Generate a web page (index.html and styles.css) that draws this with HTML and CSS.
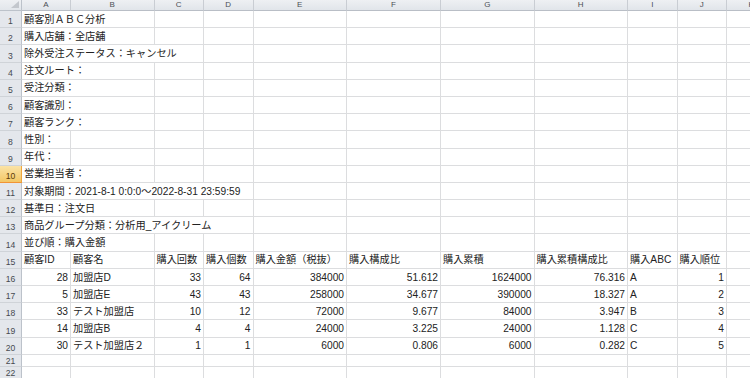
FILE: index.html
```html
<!DOCTYPE html>
<html lang="ja">
<head>
<meta charset="utf-8">
<title>顧客別ABC分析</title>
<link rel="stylesheet" href="styles.css">
</head>
<body>
<div class="sheet">
  <div class="corner"><svg width="8" height="7" viewBox="0 0 8 7"><polygon points="8,0 8,7 0,7" fill="#c3c7cd"/></svg></div>
  <div class="ch">A</div><div class="ch">B</div><div class="ch">C</div><div class="ch">D</div><div class="ch">E</div><div class="ch">F</div><div class="ch">G</div><div class="ch">H</div><div class="ch">I</div><div class="ch">J</div><div class="ch">K</div>

  <div class="rh">1</div><div class="c s2">顧客別ＡＢＣ分析</div><div class="c"></div><div class="c"></div><div class="c"></div><div class="c"></div><div class="c"></div><div class="c"></div><div class="c"></div><div class="c"></div><div class="c"></div>
  <div class="rh">2</div><div class="c s2">購入店舗：全店舗</div><div class="c"></div><div class="c"></div><div class="c"></div><div class="c"></div><div class="c"></div><div class="c"></div><div class="c"></div><div class="c"></div><div class="c"></div>
  <div class="rh">3</div><div class="c s3">除外受注ステータス：キャンセル</div><div class="c"></div><div class="c"></div><div class="c"></div><div class="c"></div><div class="c"></div><div class="c"></div><div class="c"></div><div class="c"></div>
  <div class="rh">4</div><div class="c s2">注文ルート：</div><div class="c"></div><div class="c"></div><div class="c"></div><div class="c"></div><div class="c"></div><div class="c"></div><div class="c"></div><div class="c"></div><div class="c"></div>
  <div class="rh">5</div><div class="c s2">受注分類：</div><div class="c"></div><div class="c"></div><div class="c"></div><div class="c"></div><div class="c"></div><div class="c"></div><div class="c"></div><div class="c"></div><div class="c"></div>
  <div class="rh">6</div><div class="c s2">顧客識別：</div><div class="c"></div><div class="c"></div><div class="c"></div><div class="c"></div><div class="c"></div><div class="c"></div><div class="c"></div><div class="c"></div><div class="c"></div>
  <div class="rh">7</div><div class="c s2">顧客ランク：</div><div class="c"></div><div class="c"></div><div class="c"></div><div class="c"></div><div class="c"></div><div class="c"></div><div class="c"></div><div class="c"></div><div class="c"></div>
  <div class="rh">8</div><div class="c">性別：</div><div class="c"></div><div class="c"></div><div class="c"></div><div class="c"></div><div class="c"></div><div class="c"></div><div class="c"></div><div class="c"></div><div class="c"></div><div class="c"></div>
  <div class="rh">9</div><div class="c">年代：</div><div class="c"></div><div class="c"></div><div class="c"></div><div class="c"></div><div class="c"></div><div class="c"></div><div class="c"></div><div class="c"></div><div class="c"></div><div class="c"></div>
  <div class="rh sel">10</div><div class="c s2">営業担当者：</div><div class="c"></div><div class="c"></div><div class="c"></div><div class="c"></div><div class="c"></div><div class="c"></div><div class="c"></div><div class="c"></div><div class="c"></div>
  <div class="rh">11</div><div class="c s4">対象期間：2021-8-1 0:0:0～2022-8-31 23:59:59</div><div class="c"></div><div class="c"></div><div class="c"></div><div class="c"></div><div class="c"></div><div class="c"></div><div class="c"></div>
  <div class="rh">12</div><div class="c s2">基準日：注文日</div><div class="c"></div><div class="c"></div><div class="c"></div><div class="c"></div><div class="c"></div><div class="c"></div><div class="c"></div><div class="c"></div><div class="c"></div>
  <div class="rh">13</div><div class="c s4">商品グループ分類：分析用_アイクリーム</div><div class="c"></div><div class="c"></div><div class="c"></div><div class="c"></div><div class="c"></div><div class="c"></div><div class="c"></div>
  <div class="rh">14</div><div class="c s2">並び順：購入金額</div><div class="c"></div><div class="c"></div><div class="c"></div><div class="c"></div><div class="c"></div><div class="c"></div><div class="c"></div><div class="c"></div><div class="c"></div>

  <div class="rh">15</div><div class="c">顧客ID</div><div class="c">顧客名</div><div class="c">購入回数</div><div class="c">購入個数</div><div class="c">購入金額（税抜）</div><div class="c">購入構成比</div><div class="c">購入累積</div><div class="c">購入累積構成比</div><div class="c">購入ABC</div><div class="c">購入順位</div><div class="c"></div>
  <div class="rh">16</div><div class="c n">28</div><div class="c">加盟店D</div><div class="c n">33</div><div class="c n">64</div><div class="c n">384000</div><div class="c n">51.612</div><div class="c n">1624000</div><div class="c n">76.316</div><div class="c">A</div><div class="c n">1</div><div class="c"></div>
  <div class="rh">17</div><div class="c n">5</div><div class="c">加盟店E</div><div class="c n">43</div><div class="c n">43</div><div class="c n">258000</div><div class="c n">34.677</div><div class="c n">390000</div><div class="c n">18.327</div><div class="c">A</div><div class="c n">2</div><div class="c"></div>
  <div class="rh">18</div><div class="c n">33</div><div class="c">テスト加盟店</div><div class="c n">10</div><div class="c n">12</div><div class="c n">72000</div><div class="c n">9.677</div><div class="c n">84000</div><div class="c n">3.947</div><div class="c">B</div><div class="c n">3</div><div class="c"></div>
  <div class="rh">19</div><div class="c n">14</div><div class="c">加盟店B</div><div class="c n">4</div><div class="c n">4</div><div class="c n">24000</div><div class="c n">3.225</div><div class="c n">24000</div><div class="c n">1.128</div><div class="c">C</div><div class="c n">4</div><div class="c"></div>
  <div class="rh">20</div><div class="c n">30</div><div class="c">テスト加盟店２</div><div class="c n">1</div><div class="c n">1</div><div class="c n">6000</div><div class="c n">0.806</div><div class="c n">6000</div><div class="c n">0.282</div><div class="c">C</div><div class="c n">5</div><div class="c"></div>

  <div class="rh sm">21</div><div class="c"></div><div class="c"></div><div class="c"></div><div class="c"></div><div class="c"></div><div class="c"></div><div class="c"></div><div class="c"></div><div class="c"></div><div class="c"></div><div class="c"></div>
  <div class="rh sm">22</div><div class="c"></div><div class="c"></div><div class="c"></div><div class="c"></div><div class="c"></div><div class="c"></div><div class="c"></div><div class="c"></div><div class="c"></div><div class="c"></div><div class="c"></div>
</div>
</body>
</html>
```

FILE: styles.css
```css
html, body {
  margin: 0;
  padding: 0;
  background: #ffffff;
  overflow: hidden;
}

body {
  width: 750px;
  height: 378px;
}

.sheet {
  display: grid;
  grid-template-columns: 22px 49px 83.5px 49.5px 49.5px 93.5px 94px 93.5px 93.5px 49.5px 49.5px 49.5px;
  grid-template-rows: 11px repeat(20, 17.2px) 12px 12px;
  width: 777px;
  height: 378px;
  font-family: "Liberation Sans", "Noto Sans CJK JP", sans-serif;
  font-size: 10.2px;
  color: #222222;
}

.sheet > div {
  box-sizing: border-box;
  overflow: visible;
  white-space: nowrap;
  min-width: 0;
}

.corner {
  background: linear-gradient(#eef0f3, #e2e6eb);
  border-right: 1px solid #bcc2ca;
  border-bottom: 1px solid #bcc2ca;
  display: flex;
  justify-content: flex-end;
  align-items: flex-end;
  padding: 0 2px 2px 0;
}

.ch {
  background: linear-gradient(#eef0f3, #e1e5ea);
  border-right: 1px solid #c9cdd3;
  border-bottom: 1px solid #b9bec6;
  display: flex;
  align-items: center;
  justify-content: center;
  font-size: 8px;
  line-height: 10px;
  color: #4b4f55;
}

.rh {
  background: #e4e7ec;
  border-right: 1px solid #bcc2ca;
  border-bottom: 1px solid #cfd3d8;
  display: flex;
  align-items: flex-end;
  justify-content: center;
  font-size: 8.6px;
  line-height: 10px;
  padding-bottom: 1px;
  color: #464a50;
}

.rh.sm {
  padding-bottom: 0;
  line-height: 9px;
}

.rh.sel {
  background: linear-gradient(#fbe3a6, #f3c766);
  border-right: 1px solid #f0a53e;
  border-bottom: 1px solid #f29436;
  color: #5a3a08;
}

.c {
  border-right: 1px solid #dcdddf;
  border-bottom: 1px solid #dcdddf;
  display: flex;
  align-items: flex-end;
  padding: 0 2px 1.5px 2px;
  line-height: 12px;
}

.n {
  justify-content: flex-end;
}

.s2 { grid-column: span 2; }
.s3 { grid-column: span 3; }
.s4 { grid-column: span 4; }
```
